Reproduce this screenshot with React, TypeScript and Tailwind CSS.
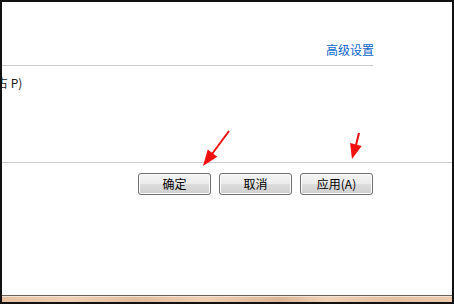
import React from "react";

function DialogButton({ label }: { label: string }) {
  return (
    <button className="w-[73px] h-[22px] rounded-[3px] border border-[#707070] bg-[linear-gradient(#f4f4f4,#ebebeb_50%,#dddddd_51%,#cfcfcf)] text-[12px] text-black leading-none shadow-[inset_0_0_0_1px_#fcfcfc]">
      {label}
    </button>
  );
}

export default function App() {
  return (
    <div
      className="relative w-[454px] h-[304px] bg-[#111111] p-[2px] flex flex-col"
      style={{ fontFamily: '"Noto Sans CJK SC", "Liberation Sans", sans-serif' }}
    >
      <div className="flex-1 bg-white flex flex-col overflow-hidden">
        <div className="w-[372px] flex justify-end pt-[40px] h-[63px]">
          <span className="text-[12px] leading-[16px] text-[#0a64c8]">高级设置</span>
        </div>
        <div className="w-[371px] h-px bg-[#cccccc]" />
        <div className="h-[96px] pt-[9px] overflow-hidden">
          <span className="block -ml-[6px] text-[12px] leading-[16px] text-[#1a1a1a]">占 P)</span>
        </div>
        <div className="h-px bg-[#cccccc]" />
        <div className="w-[371px] flex justify-end gap-[8px] pt-[10px]">
          <DialogButton label="确定" />
          <DialogButton label="取消" />
          <DialogButton label="应用(A)" />
        </div>
      </div>
      <div className="h-px bg-[#6b625c]" />
      <div className="h-px bg-[#f4e4d6]" />
      <div className="h-[5px] bg-[linear-gradient(90deg,#e7c2a2,#efd0b4_15%,#e2bd9d_30%,#efcfb3_45%,#dcb595_62%,#f0d2b8_72%,#e4c0a0_86%,#eccbae)]" />
      <svg className="absolute inset-0 pointer-events-none" width="454" height="304">
        <line x1="229" y1="131" x2="212" y2="154" stroke="#f01010" strokeWidth="2" />
        <polygon points="203,166 217.3,156.7 207.7,149.6" fill="#f01010" />
        <line x1="359" y1="133" x2="356" y2="145" stroke="#f01010" strokeWidth="2" />
        <polygon points="352,159 361.7,146.1 350.1,142.9" fill="#f01010" />
      </svg>
    </div>
  );
}
